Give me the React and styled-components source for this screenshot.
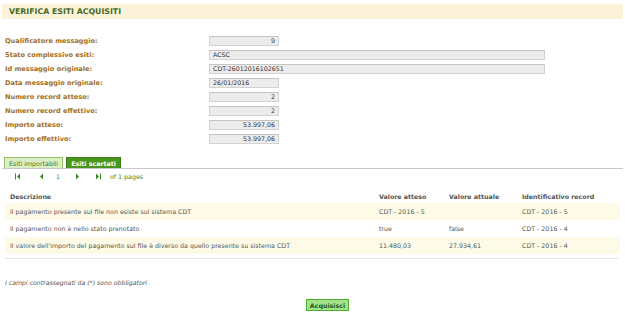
import React from 'react';
import styled, { createGlobalStyle } from 'styled-components';

const GlobalStyle = createGlobalStyle`
  body {
    margin: 0;
    background: #fff;
    font-family: 'DejaVu Sans', Verdana, sans-serif;
  }
`;

const Page = styled.div`
  width: 625px;
  height: 314px;
  padding: 4px 2px 0 2px;
  box-sizing: border-box;
  overflow: hidden;
`;

const Banner = styled.div`
  height: 15px;
  background: #fcf2da;
  display: flex;
  align-items: center;
  padding-left: 7px;
  font-size: 7.8px;
  font-weight: bold;
  color: #446a1e;
`;

const Form = styled.div`
  margin-top: 15px;
  padding-left: 3px;
`;

const Row = styled.div`
  display: flex;
  align-items: center;
  height: 14px;
`;

const Label = styled.div`
  width: 204px;
  font-size: 6.6px;
  font-weight: bold;
  color: #a26f24;
`;

const Field = styled.div`
  box-sizing: border-box;
  width: ${p => (p.$wide ? '336px' : '70px')};
  height: 10px;
  background: #ececec;
  border: 1px solid #d2d2d2;
  border-top-color: #c4c4c4;
  font-size: 6.3px;
  color: #333;
  line-height: 8px;
  padding: 0 3px;
  text-align: ${p => (p.$num ? 'right' : 'left')};
`;

const TabBar = styled.div`
  margin-top: 11px;
  display: flex;
  align-items: flex-end;
  padding-left: 2px;
  border-bottom: 1px solid #c8c8c8;
  height: 11px;
`;

const Tab = styled.div`
  box-sizing: border-box;
  height: 11px;
  margin-right: 3px;
  padding: 0 4px;
  display: flex;
  align-items: center;
  font-size: 6.3px;
  font-weight: ${p => (p.$active ? 'bold' : 'normal')};
  color: ${p => (p.$active ? '#fff' : '#3f7a1f')};
  background: ${p => (p.$active ? '#48961c' : '#dbeec6')};
  border: 1px solid ${p => (p.$active ? '#3b7f14' : '#94bf66')};
  border-bottom: none;
`;

const Pager = styled.div`
  display: flex;
  align-items: center;
  height: 14px;
  color: #3a8a22;
  font-size: 6.3px;
  padding-left: 13px;
`;

const PageBtn = styled.span`
  display: inline-flex;
  align-items: center;
  width: ${p => p.$w || '20px'};
`;

const Table = styled.table`
  margin: 6px 0 0 3px;
  width: 615px;
  border-collapse: collapse;
  table-layout: fixed;
  font-size: 6.3px;
  color: #555;
`;

const Th = styled.th`
  text-align: left;
  font-weight: bold;
  height: 14px;
  padding: 0 0 0 5px;
  color: #555;
`;

const Tr = styled.tr`
  background: ${p => (p.$alt ? '#fdfbe8' : '#fff')};
`;

const Td = styled.td`
  height: 17px;
  padding: 0 0 0 5px;
  white-space: nowrap;
`;

const Rule = styled.div`
  margin: 4px 5px 0 3px;
  height: 1px;
  background: #e2e2e2;
`;

const Note = styled.div`
  margin: 20px 0 0 3px;
  font-size: 6.2px;
  font-style: italic;
  color: #555;
`;

const Actions = styled.div`
  display: flex;
  justify-content: center;
  padding-left: 30px;
  margin-top: 13px;
`;

const Button = styled.button`
  box-sizing: border-box;
  height: 12px;
  padding: 0 3px;
  background: #a4e28a;
  border: 1px solid #4bb02c;
  color: #1e5a10;
  font-family: 'DejaVu Sans', Verdana, sans-serif;
  font-size: 6.3px;
  font-weight: bold;
  line-height: 9px;
`;

const Tri = ({ dir, bar }) => (
  <svg width="6" height="7" viewBox="0 0 6 7">
    {dir === 'left' ? (
      <>
        {bar && <rect x="0" y="0.5" width="1" height="6" fill="#3a8a22" />}
        <polygon points="5,0.5 5,6.5 2,3.5" fill="#3a8a22" />
      </>
    ) : (
      <>
        <polygon points="1,0.5 1,6.5 4,3.5" fill="#3a8a22" />
        {bar && <rect x="5" y="0.5" width="1" height="6" fill="#3a8a22" />}
      </>
    )}
  </svg>
);

const fields = [
  ['Qualificatore messaggio:', '9', false, true],
  ['Stato complessivo esiti:', 'ACSC', true, false],
  ['Id messaggio originale:', 'CDT-26012016102651', true, false],
  ['Data messaggio originale:', '26/01/2016', false, false],
  ['Numero record atteso:', '2', false, true],
  ['Numero record effettivo:', '2', false, true],
  ['Importo atteso:', '53.997,06', false, true],
  ['Importo effettivo:', '53.997,06', false, true],
];

const rows = [
  ['Il pagamento presente sul file non esiste sul sistema CDT', 'CDT - 2016 - 5', '', 'CDT - 2016 - 5'],
  ['Il pagamento non è nello stato prenotato', 'true', 'false', 'CDT - 2016 - 4'],
  ["Il valore dell'importo del pagamento sul file è diverso da quello presente su sistema CDT", '11.480,03', '27.934,61', 'CDT - 2016 - 4'],
];

export default function App() {
  return (
    <Page>
      <GlobalStyle />
      <Banner>VERIFICA ESITI ACQUISITI</Banner>

      <Form>
        {fields.map(([label, value, wide, num]) => (
          <Row key={label}>
            <Label>{label}</Label>
            <Field $wide={wide} $num={num}>{value}</Field>
          </Row>
        ))}
      </Form>

      <TabBar>
        <Tab>Esiti importabili</Tab>
        <Tab $active>Esiti scartati</Tab>
      </TabBar>

      <Pager>
        <PageBtn $w="23px"><Tri dir="left" bar /></PageBtn>
        <PageBtn $w="18px"><Tri dir="left" /></PageBtn>
        <PageBtn $w="19px">1</PageBtn>
        <PageBtn $w="20px"><Tri dir="right" /></PageBtn>
        <PageBtn $w="15px"><Tri dir="right" bar /></PageBtn>
        <span>of 1 pages</span>
      </Pager>

      <Table>
        <colgroup>
          <col style={{ width: 369 }} />
          <col style={{ width: 70 }} />
          <col style={{ width: 73 }} />
          <col style={{ width: 103 }} />
        </colgroup>
        <thead>
          <tr>
            <Th>Descrizione</Th>
            <Th>Valore atteso</Th>
            <Th>Valore attuale</Th>
            <Th>Identificativo record</Th>
          </tr>
        </thead>
        <tbody>
          {rows.map((r, i) => (
            <Tr key={i} $alt={i % 2 === 0}>
              {r.map((c, j) => <Td key={j}>{c}</Td>)}
            </Tr>
          ))}
        </tbody>
      </Table>
      <Rule />

      <Note>I campi contrassegnati da (*) sono obbligatori</Note>

      <Actions>
        <Button>Acquisisci</Button>
      </Actions>
    </Page>
  );
}
